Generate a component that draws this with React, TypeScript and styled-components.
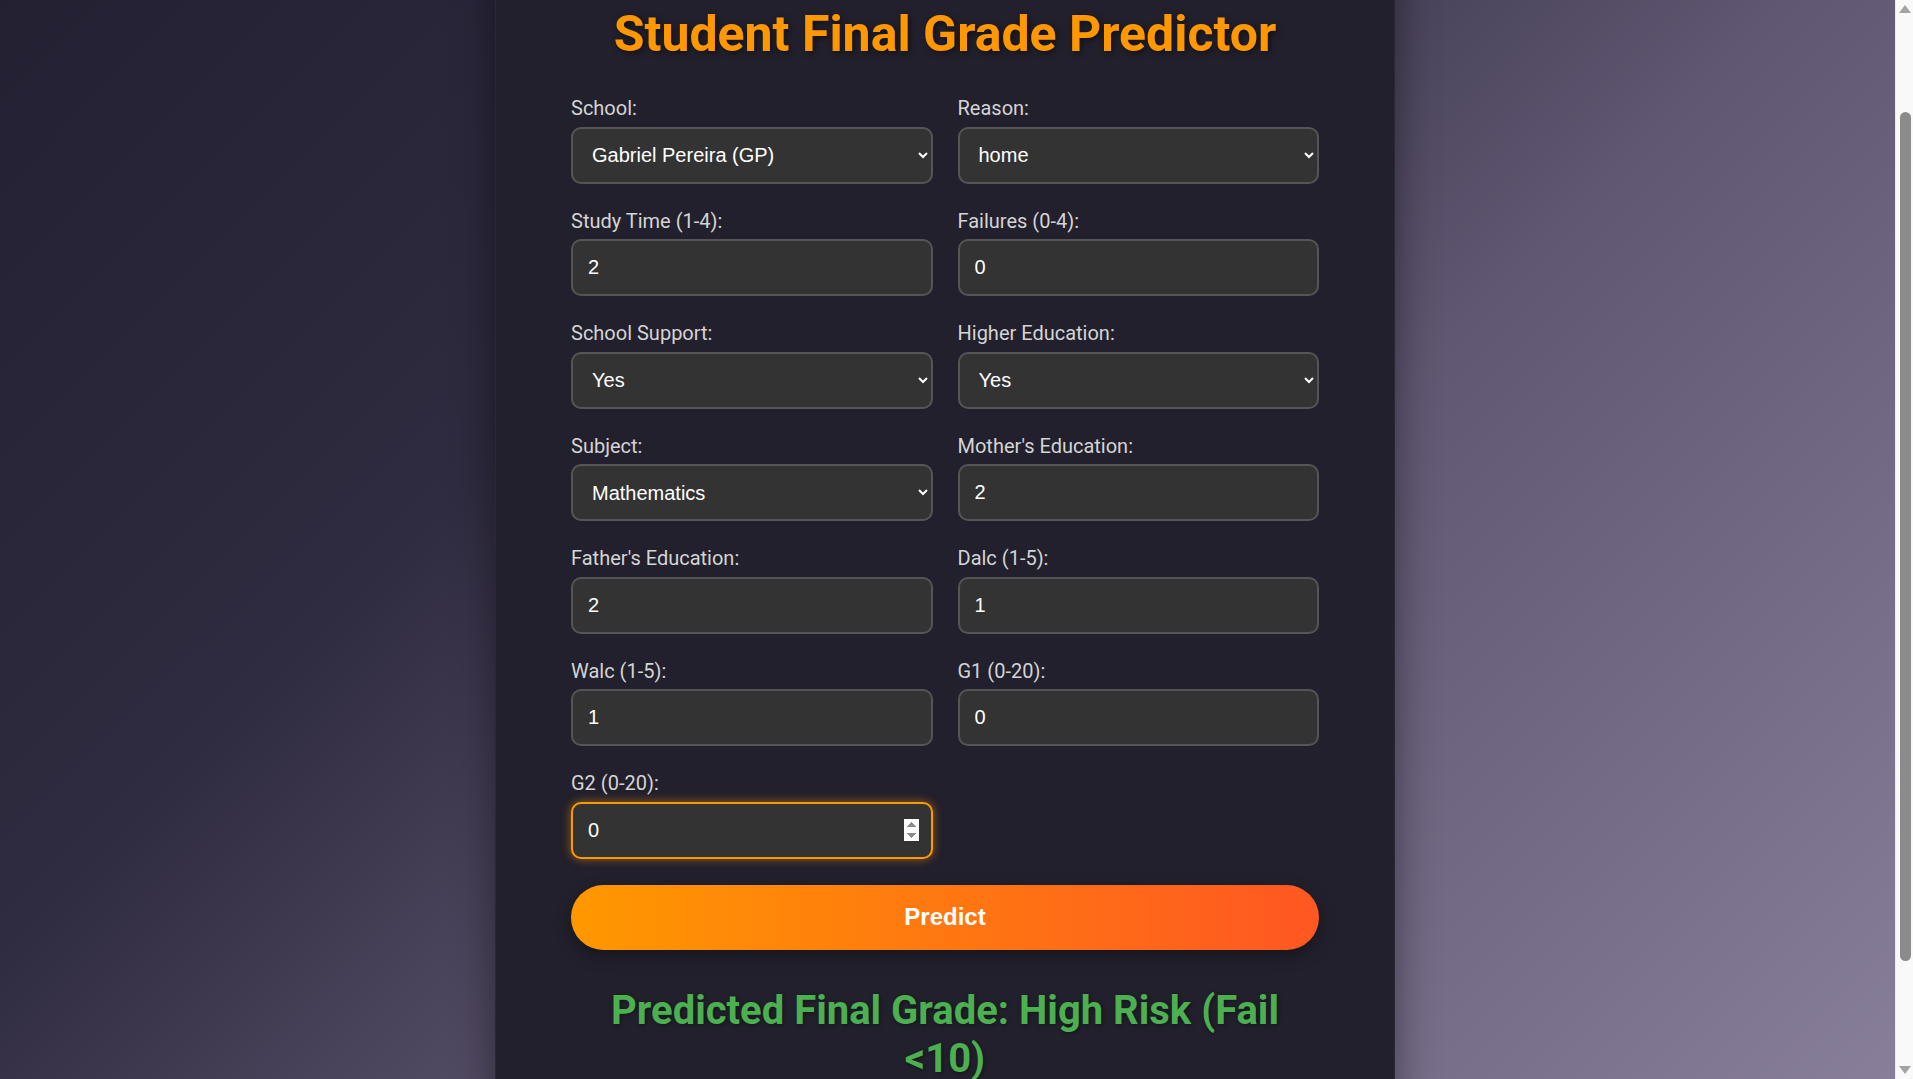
import React, { useLayoutEffect, useRef, useEffect } from "react";
import styled, { createGlobalStyle, css } from "styled-components";

const GlobalStyle = createGlobalStyle`
  html {
    margin: 0;
    min-height: 100%;
  }
  body {
    margin: 0;
    padding: 38px 23px 37px 0;
    font-family: Roboto, "Liberation Sans", Arial, sans-serif;
    background: linear-gradient(135deg, #211f30 0%, #2f2b40 33%, #605772 59%, #8d83a0 100%);
    box-sizing: border-box;
  }
`;

const Card = styled.main`
  width: 900px;
  box-sizing: border-box;
  margin: 0 auto;
  padding: 50px 75px;
  background: #22202c;
  border-left: 1px solid rgba(255, 255, 255, 0.04);
  border-right: 1px solid rgba(255, 255, 255, 0.04);
  box-shadow: 0 0 40px rgba(0, 0, 0, 0.45);
`;

const Title = styled.h1`
  margin: 38px 0 34px;
  font-family: Roboto, sans-serif;
  font-size: 50px;
  line-height: 58px;
  font-weight: 700;
  color: #ff9800;
  text-align: center;
  text-shadow: 2px 2px 6px rgba(0, 0, 0, 0.5);
`;

const Form = styled.form`
  display: flex;
  flex-direction: column;
  gap: 26px;
`;

const FieldGrid = styled.div`
  display: grid;
  grid-template-columns: 1fr 1fr;
  column-gap: 25px;
  row-gap: 26px;
`;

const Field = styled.div`
  display: flex;
  flex-direction: column;
`;

const Label = styled.label`
  display: block;
  font-family: Roboto, sans-serif;
  font-size: 20px;
  line-height: 23.5px;
  color: #d4d4d4;
  margin-bottom: 6px;
`;

const controlBase = css<{ $focused?: boolean }>`
  box-sizing: border-box;
  width: 100%;
  height: 57px;
  border-radius: 10px;
  border: 2px solid #555555;
  background: #333333;
  color: #ffffff;
  font-family: "Liberation Sans", Arial, sans-serif;
  font-size: 20px;
  outline: none;
  ${(p) =>
    p.$focused &&
    css`
      border-color: #ff9800;
      box-shadow: 0 0 10px rgba(255, 152, 0, 0.55);
    `}
`;

const Select = styled.select<{ $focused?: boolean }>`
  ${controlBase};
  padding: 0 14px 0 15px;
`;

const NumberInput = styled.input<{ $focused?: boolean }>`
  ${controlBase};
  padding: 0 12px 0 15px;
`;

const PredictButton = styled.button`
  height: 65px;
  width: 100%;
  border: none;
  border-radius: 40px;
  background: linear-gradient(90deg, #ff9800 0%, #ff5722 100%);
  color: #ffffff;
  font-family: "Liberation Sans", Arial, sans-serif;
  font-weight: 700;
  font-size: 24px;
  cursor: pointer;
  box-shadow: 0 6px 16px rgba(0, 0, 0, 0.35);
`;

const Result = styled.h2`
  margin: 37px 0 37px;
  font-family: Roboto, sans-serif;
  font-size: 40px;
  line-height: 48px;
  font-weight: 700;
  color: #4caf50;
  text-align: center;
  text-shadow: 1px 1px 4px rgba(0, 0, 0, 0.4);
`;

/* Browser scrollbar drawn over the right edge, as seen in the screenshot */
const ScrollTrack = styled.div`
  position: fixed;
  top: 0;
  right: 0;
  width: 18px;
  height: 100vh;
  background: #f9f9f9;
  border-left: 1px solid #ececec;
  box-sizing: border-box;
  z-index: 10;
`;

const ScrollArrow = styled.svg<{ $bottom?: boolean }>`
  position: absolute;
  left: 3px;
  width: 12px;
  height: 8px;
  ${(p) => (p.$bottom ? "bottom: 5px;" : "top: 5px;")}
`;

const ScrollThumb = styled.div`
  position: absolute;
  left: 4px;
  width: 11px;
  top: 112px;
  height: 849px;
  border-radius: 6px;
  background: #8b8b8b;
`;

type FieldDef =
  | { kind: "select"; id: string; label: string; value: string; options: { value: string; label: string }[] }
  | { kind: "number"; id: string; label: string; value: string; min: number; max: number; focused?: boolean };

const yesNo = [
  { value: "yes", label: "Yes" },
  { value: "no", label: "No" },
];

const fields: FieldDef[] = [
  {
    kind: "select",
    id: "school",
    label: "School:",
    value: "GP",
    options: [
      { value: "GP", label: "Gabriel Pereira (GP)" },
      { value: "MS", label: "Mousinho da Silveira (MS)" },
    ],
  },
  {
    kind: "select",
    id: "reason",
    label: "Reason:",
    value: "home",
    options: [
      { value: "home", label: "home" },
      { value: "reputation", label: "reputation" },
      { value: "course", label: "course" },
      { value: "other", label: "other" },
    ],
  },
  { kind: "number", id: "studytime", label: "Study Time (1-4):", value: "2", min: 1, max: 4 },
  { kind: "number", id: "failures", label: "Failures (0-4):", value: "0", min: 0, max: 4 },
  { kind: "select", id: "schoolsup", label: "School Support:", value: "yes", options: yesNo },
  { kind: "select", id: "higher", label: "Higher Education:", value: "yes", options: yesNo },
  {
    kind: "select",
    id: "subject",
    label: "Subject:",
    value: "math",
    options: [
      { value: "math", label: "Mathematics" },
      { value: "por", label: "Portuguese" },
    ],
  },
  { kind: "number", id: "medu", label: "Mother's Education:", value: "2", min: 0, max: 4 },
  { kind: "number", id: "fedu", label: "Father's Education:", value: "2", min: 0, max: 4 },
  { kind: "number", id: "dalc", label: "Dalc (1-5):", value: "1", min: 1, max: 5 },
  { kind: "number", id: "walc", label: "Walc (1-5):", value: "1", min: 1, max: 5 },
  { kind: "number", id: "g1", label: "G1 (0-20):", value: "0", min: 0, max: 20 },
  { kind: "number", id: "g2", label: "G2 (0-20):", value: "0", min: 0, max: 20, focused: true },
];

export default function App() {
  const focusRef = useRef<HTMLInputElement>(null);

  useLayoutEffect(() => {
    focusRef.current?.focus({ preventScroll: true });
    window.scrollTo(0, 121);
  }, []);

  useEffect(() => {
    const id = requestAnimationFrame(() => window.scrollTo(0, 121));
    return () => cancelAnimationFrame(id);
  }, []);

  return (
    <>
      <GlobalStyle />
      <Card>
        <Title>Student Final Grade Predictor</Title>
        <Form onSubmit={(e) => e.preventDefault()}>
          <FieldGrid>
            {fields.map((f) => (
              <Field key={f.id}>
                <Label htmlFor={f.id}>{f.label}</Label>
                {f.kind === "select" ? (
                  <Select id={f.id} defaultValue={f.value}>
                    {f.options.map((o) => (
                      <option key={o.value} value={o.value}>
                        {o.label}
                      </option>
                    ))}
                  </Select>
                ) : (
                  <NumberInput
                    id={f.id}
                    type="number"
                    min={f.min}
                    max={f.max}
                    defaultValue={f.value}
                    $focused={f.focused}
                    ref={f.focused ? focusRef : undefined}
                  />
                )}
              </Field>
            ))}
          </FieldGrid>
          <PredictButton type="submit">Predict</PredictButton>
        </Form>
        <Result>Predicted Final Grade: High Risk (Fail &lt;10)</Result>
      </Card>
      <ScrollTrack aria-hidden="true">
        <ScrollArrow viewBox="0 0 12 8">
          <polygon points="6,0 12,8 0,8" fill="#a3a3a3" />
        </ScrollArrow>
        <ScrollThumb />
        <ScrollArrow $bottom viewBox="0 0 12 8">
          <polygon points="0,0 12,0 6,8" fill="#a3a3a3" />
        </ScrollArrow>
      </ScrollTrack>
    </>
  );
}
